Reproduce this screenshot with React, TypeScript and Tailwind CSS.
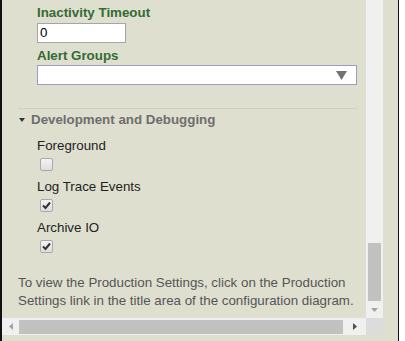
import React from "react";

function Checkbox({ checked }: { checked?: boolean }) {
  return (
    <div className="w-[13px] h-[13px] border border-[#a9a9a9] rounded-[2px] bg-gradient-to-b from-[#f4f4f4] to-[#dedede] flex items-center justify-center">
      {checked && (
        <svg width="9" height="9" viewBox="0 0 9 9">
          <path d="M1 4.5 L3.5 7 L8 1.5" stroke="#333" strokeWidth="2" fill="none" />
        </svg>
      )}
    </div>
  );
}

export default function App() {
  return (
    <div
      className="w-[405px] h-[341px] bg-white flex"
      style={{ fontFamily: '"Liberation Sans", Arial, sans-serif' }}
    >
      <div className="w-[399px] h-[341px] bg-[#dfdfd0] border-l-2 border-r border-[#111] flex flex-col">
        <div className="flex h-[318px]">
          <div className="w-[364px] h-[318px] overflow-hidden flex flex-col">
            <div className="pl-[35px] pt-[5px] flex flex-col">
              <div className="text-[13.33px] leading-[16px] font-bold text-[#336b33]">Inactivity Timeout</div>
              <div className="mt-[2px] w-[89px] h-[20px] bg-white border border-[#a5a5a5] text-[13.33px] leading-[18px] pl-[2px] text-black">0</div>
              <div className="mt-[5px] text-[13.33px] leading-[16px] font-bold text-[#336b33]">Alert Groups</div>
              <div className="mt-[1px] w-[320px] h-[20px] bg-white border border-[#9d9bc2] flex items-center justify-end pr-[9px]">
                <svg width="11" height="9" viewBox="0 0 11 9">
                  <path d="M0 0 L11 0 L5.5 9 Z" fill="#727272" />
                </svg>
              </div>
            </div>
            <div className="ml-[16px] mt-[23px] w-[339px] h-px bg-[#cfcfc0]" />
            <div className="pl-[17px] mt-[3px] flex items-center">
              <svg width="6" height="4" viewBox="0 0 6 4" className="mr-[6px]">
                <path d="M0 0 L6 0 L3 4 Z" fill="#333" />
              </svg>
              <span className="text-[13.33px] leading-[16px] font-bold text-[#6e6e6e]">Development and Debugging</span>
            </div>
            <div className="pl-[35px] mt-[10px] flex flex-col">
              <div className="text-[13.33px] leading-[16px] text-[#222]">Foreground</div>
              <div className="mt-[4px] ml-[3px]"><Checkbox /></div>
              <div className="mt-[8px] text-[13.33px] leading-[16px] text-[#222]">Log Trace Events</div>
              <div className="mt-[4px] ml-[3px]"><Checkbox checked /></div>
              <div className="mt-[8px] text-[13.33px] leading-[16px] text-[#222]">Archive IO</div>
              <div className="mt-[4px] ml-[3px]"><Checkbox checked /></div>
            </div>
            <div className="pl-[16px] mt-[21px] text-[13.33px] leading-[18px] text-[#555] w-[360px]">
              To view the Production Settings, click on the Production Settings link in the title area of the configuration diagram.
            </div>
          </div>
          <div className="w-[17px] h-[318px] bg-[#f0f0f0] flex flex-col items-center">
            <div className="flex-1" />
            <div className="w-[13px] h-[58px] bg-[#c1c1c1]" />
            <div className="h-[17px] flex items-center justify-center">
              <svg width="7" height="4" viewBox="0 0 7 4">
                <path d="M0 0 L7 0 L3.5 4 Z" fill="#a3a3a3" />
              </svg>
            </div>
          </div>
        </div>
        <div className="flex h-[17px]">
          <div className="w-[364px] h-[17px] bg-[#f0f0f0] flex items-center">
            <div className="w-[17px] flex justify-center">
              <svg width="4" height="7" viewBox="0 0 4 7">
                <path d="M4 0 L4 7 L0 3.5 Z" fill="#a3a3a3" />
              </svg>
            </div>
            <div className="w-[324px] h-[14px] bg-[#c1c1c1]" />
            <div className="flex-1 flex justify-center">
              <svg width="4" height="7" viewBox="0 0 4 7">
                <path d="M0 0 L0 7 L4 3.5 Z" fill="#505050" />
              </svg>
            </div>
          </div>
          <div className="w-[17px] h-[17px] bg-[#dcdcdc]" />
        </div>
      </div>
    </div>
  );
}
